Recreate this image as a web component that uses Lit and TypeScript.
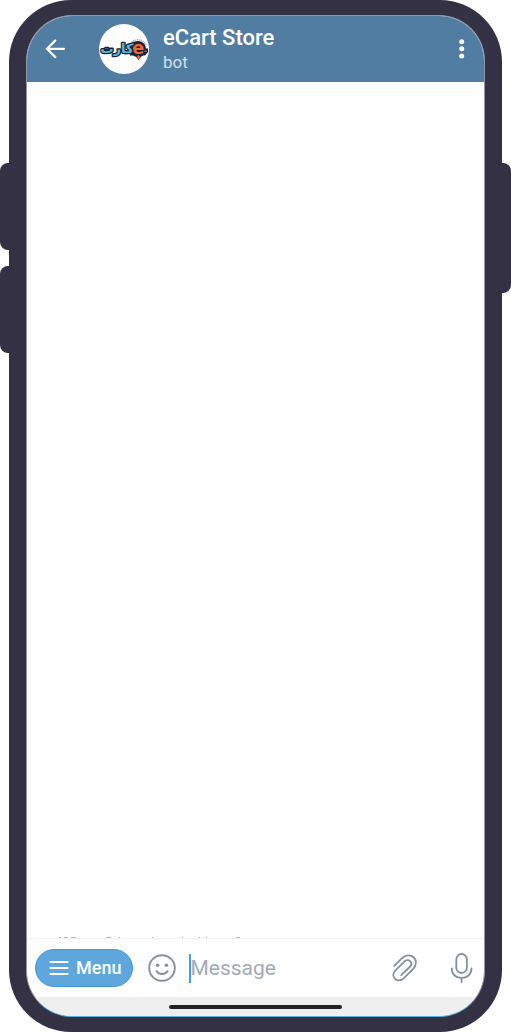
import { LitElement, html, css, svg } from "lit";
import { customElement } from "lit/decorators.js";

const backIcon = svg`<svg width="24" height="24" viewBox="0 0 24 24" fill="none" stroke="#fff" stroke-width="2.3" stroke-linecap="round" stroke-linejoin="round" aria-hidden="true"><path d="M21 11.8H3.8M12.3 3.5L4 11.8L12.3 20.1"/></svg>`;

const moreIcon = svg`<svg width="24" height="24" viewBox="0 0 24 24" fill="#fff" aria-hidden="true"><circle cx="12.7" cy="4.7" r="2.5"/><circle cx="12.7" cy="11.8" r="2.5"/><circle cx="12.7" cy="19" r="2.5"/></svg>`;

const menuIcon = svg`<svg width="20" height="18" viewBox="0 0 20 18" fill="none" stroke="#fff" stroke-width="2.2" stroke-linecap="round" aria-hidden="true"><path d="M1.5 3H18.5M1.5 9H18.5M1.5 15H18.5"/></svg>`;

const smileIcon = svg`<svg width="30" height="30" viewBox="0 0 30 30" fill="none" stroke="#84909a" stroke-width="1.9" stroke-linecap="round" aria-hidden="true"><circle cx="15" cy="15" r="12.8"/><path d="M9.6 18.2C12 22 18 22 20.4 18.2" stroke-width="2"/><circle cx="10.6" cy="12.2" r="1.8" fill="#84909a" stroke="none"/><circle cx="19.4" cy="12.2" r="1.8" fill="#84909a" stroke="none"/></svg>`;

const clipIcon = svg`<svg width="30" height="30" viewBox="0 0 30 30" fill="none" stroke="#84909a" stroke-width="1.8" stroke-linecap="round" stroke-linejoin="round" aria-hidden="true"><path d="M4.3 12.8L11.8 5.4C15.2 2 20.6 1.3 23.8 4.5C27 7.7 26.4 12.7 23 16.1L13.7 25.3C11.1 27.9 7.4 28.2 5 25.8C2.6 23.4 2.9 19.9 5.5 17.3L14.3 8.7C16.2 6.8 18.8 6.7 20.3 8.3C21.8 9.9 21.5 12.2 19.7 14L11.2 22.2"/></svg>`;

const micIcon = svg`<svg width="30" height="30" viewBox="0 0 30 30" fill="none" stroke="#84909a" stroke-width="1.8" stroke-linecap="round" aria-hidden="true"><rect x="9.3" y="1" width="10.6" height="19" rx="5.3"/><path d="M4.7 15.5C4.7 21.4 9.1 25 14.6 25S24.5 21.4 24.5 15.5M14.6 25V29"/></svg>`;

const storeLogo = svg`<svg width="50" height="50" viewBox="0 0 50 50" role="img" aria-label="eCart">
  <circle cx="25" cy="25" r="25" fill="#fff"/>
  <path d="M33 18.2A8.5 8.5 0 0 1 47 21.5" fill="none" stroke="#a9acb4" stroke-width="1.5" stroke-dasharray="1.2 .7"/>
  <path d="M31 24.5H49V28L46 31.5H43L39.5 36L36 31.5H31Z" fill="#17233c"/>
  <circle cx="39" cy="25" r="8" fill="#17233c"/>
  <path d="M45.5 27.2H47.5M32 27.2H34M39.5 32L40.5 33L39.5 34.2L38.5 33Z" fill="#ef642d" stroke="#ef642d" stroke-width="1.4"/>
  <text class="latin" x="39.2" y="30" text-anchor="middle">e</text>
  <text class="persian" x="18" y="29" text-anchor="middle">کارت</text>
</svg>`;

@customElement("app-root")
export class AppRoot extends LitElement {
  static styles = css`
    :host {
      display: block;
      min-height: 100vh;
      background: #fff;
      font-family: Roboto, "Liberation Sans", sans-serif;
    }
    * { box-sizing: border-box; }
    button {
      display: grid;
      place-items: center;
      padding: 0;
      border: 0;
      background: none;
      font: inherit;
      cursor: pointer;
    }
    svg { display: block; }
    .phone {
      position: relative;
      display: flex;
      min-height: 100vh;
      margin: 0 9px;
      padding: 15px 17px;
      border-radius: 62px;
      background: #333143;
    }
    .key {
      position: absolute;
      width: 10px;
      background: #333143;
    }
    .key-up, .key-down {
      left: -9px;
      height: 87px;
      border-radius: 8px 0 0 8px;
    }
    .key-up { top: 163px; }
    .key-down { top: 266px; }
    .key-power {
      right: -9px;
      top: 163px;
      height: 130px;
      border-radius: 0 8px 8px 0;
    }
    .screen {
      flex: 1;
      display: flex;
      flex-direction: column;
      min-width: 0;
      overflow: hidden;
      border: 1px solid #9695a3;
      border-bottom-color: #55b4dc;
      border-radius: 46px;
      background: #fff;
    }
    .header {
      display: flex;
      align-items: center;
      height: 66px;
      padding: 0 11px 0 16px;
      background: #517da2;
      color: #fff;
    }
    .avatar { margin: 0 14px 0 32px; }
    .latin {
      font: 700 18px "DejaVu Sans", sans-serif;
      fill: #ef642d;
    }
    .persian {
      font: 700 13px "DejaVu Sans", sans-serif;
      fill: #58bade;
      stroke: #17233c;
      stroke-width: 2.6px;
      stroke-linejoin: round;
      paint-order: stroke;
    }
    .who {
      flex: 1;
      min-width: 0;
    }
    .name {
      margin: 0;
      font-size: 22px;
      line-height: 26px;
      font-weight: 500;
    }
    .kind {
      margin: 0;
      font-size: 17px;
      line-height: 22px;
      color: #cfe0ee;
    }
    .chat {
      flex: 1;
      display: flex;
      flex-direction: column;
      justify-content: flex-end;
      padding-left: 30px;
    }
    .composer {
      display: flex;
      align-items: center;
      height: 59px;
      padding: 0 7px 0 8px;
      border-top: 1px solid #f3f3f4;
    }
    .menu {
      display: flex;
      align-items: center;
      gap: 7px;
      height: 38px;
      padding: 0 11px 0 13px;
      border: 1px solid #419bd9;
      border-radius: 19px;
      background: #5ea6dc;
      color: #fff;
      font-size: 18px;
      line-height: 22px;
      font-weight: 500;
    }
    .smile { margin: 0 12px 0 14px; }
    .field {
      flex: 1;
      display: flex;
      align-items: center;
      min-width: 0;
      height: 29px;
      border-left: 2px solid #4a9bdb;
    }
    .message {
      width: 100%;
      height: 29px;
      margin-left: -1px;
      padding: 0;
      border: 0;
      outline: 0;
      background: none;
      color: #222;
      font: 400 21px/29px Roboto, "Liberation Sans", sans-serif;
    }
    .message::placeholder { color: #a2abb3; opacity: 1; }
    .mic { margin-left: 27px; }
    .nav {
      display: grid;
      place-items: center;
      height: 19px;
      background: #efefef;
    }
    .handle {
      width: 38%;
      height: 4px;
      border-radius: 2px;
      background: #222424;
    }
  `;

  render() {
    return html`
      <div class="phone">
        <span class="key key-up"></span>
        <span class="key key-down"></span>
        <span class="key key-power"></span>
        <main class="screen">
          <header class="header">
            <button aria-label="Back">${backIcon}</button>
            <div class="avatar">${storeLogo}</div>
            <div class="who">
              <h1 class="name">eCart Store</h1>
              <p class="kind">bot</p>
            </div>
            <button aria-label="More options">${moreIcon}</button>
          </header>
          <section class="chat" aria-label="Conversation">
            <svg width="200" height="1" viewBox="0 0 200 1" stroke="#b5b5b5" aria-hidden="true">
              <path d="M2 .5H4M7 .5H11M14 .5H19M49 .5H54M62 .5H63M95 .5H96M125 .5H126M142 .5H143M149 .5H150M179 .5H183" />
            </svg>
          </section>
          <form class="composer" @submit=${(e: Event) => e.preventDefault()}>
            <button class="menu" type="button">${menuIcon}<span>Menu</span></button>
            <button class="smile" type="button" aria-label="Emoji">${smileIcon}</button>
            <div class="field">
              <input class="message" type="text" aria-label="Message" placeholder="Message" />
            </div>
            <button type="button" aria-label="Attach file">${clipIcon}</button>
            <button class="mic" type="button" aria-label="Record voice message">${micIcon}</button>
          </form>
          <div class="nav"><span class="handle"></span></div>
        </main>
      </div>
    `;
  }
}
